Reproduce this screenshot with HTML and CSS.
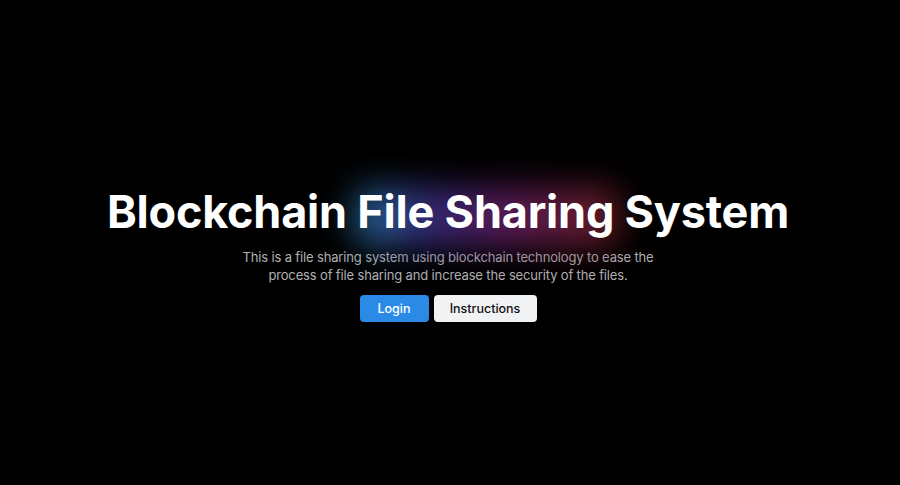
FILE: index.html
```html
<!DOCTYPE html>
<html lang="en">
<head>
<meta charset="utf-8">
<title>Blockchain File Sharing System</title>
<link rel="stylesheet" href="styles.css">
</head>
<body>
<main class="hero">
  <div class="title-wrap">
    <div class="glow"></div>
    <h1 class="title">Blockchain File Sharing System</h1>
  </div>
  <p class="subtitle">This is a file sharing system using blockchain technology to ease the process of file sharing and increase the security of the files.</p>
  <div class="actions">
    <button class="btn btn-primary">Login</button>
    <button class="btn btn-light">Instructions</button>
  </div>
</main>
</body>
</html>
```
FILE: styles.css
```css
html, body {
  margin: 0;
  padding: 0;
  background: #000;
  height: 100%;
}
body {
  font-family: Inter, "Noto Sans", sans-serif;
  color: #fff;
  overflow: hidden;
}
.hero {
  height: 485px;
  display: flex;
  flex-direction: column;
  align-items: center;
  padding: 182px 4px 0 0;
  box-sizing: border-box;
}
.title-wrap {
  position: relative;
}
.glow {
  position: absolute;
  left: 248px;
  top: 6px;
  width: 264px;
  height: 58px;
  background: linear-gradient(90deg, #2a7fb0 0%, #3a2f8a 28%, #6a1f66 58%, #7a2228 100%);
  filter: blur(17px);
  opacity: 0.85;
  border-radius: 16px;
}
.title {
  position: relative;
  margin: 0;
  font-size: 45px;
  font-weight: 700;
  line-height: 60px;
  letter-spacing: -0.2px;
  color: #fff;
}
.subtitle {
  margin: 6px 0 0;
  width: 440px;
  text-align: center;
  font-size: 13px;
  line-height: 18px;
  letter-spacing: -0.15px;
  color: #b2b2b2;
}
.actions {
  display: flex;
  gap: 5px;
  margin-top: 11px;
}
.btn {
  height: 27px;
  border: none;
  border-radius: 4px;
  font-family: Inter, "Noto Sans", sans-serif;
  font-size: 12.5px;
  font-weight: 500;
  padding: 0;
  cursor: pointer;
}
.btn-primary {
  width: 69px;
  background: #2b8ae6;
  color: #fff;
}
.btn-light {
  width: 103px;
  background: #f1f2f4;
  color: #111;
}
```
